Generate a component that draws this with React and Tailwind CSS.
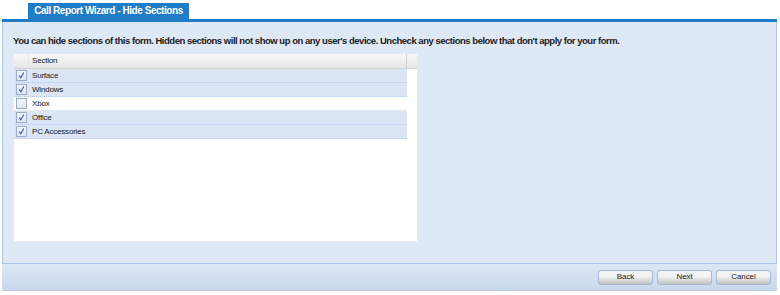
import React from "react";

const rows = [
  { name: "Surface", checked: true },
  { name: "Windows", checked: true },
  { name: "Xbox", checked: false },
  { name: "Office", checked: true },
  { name: "PC Accessories", checked: true },
];

function Check({ checked }) {
  return (
    <div className="w-[11px] h-[11px] border border-[#9aaecb] bg-gradient-to-b from-[#f4f6f9] to-[#e0e6ee] flex items-center justify-center">
      {checked && (
        <svg width="9" height="9" viewBox="0 0 9 9">
          <path d="M2.2 4.6 L3.8 6.8 L6.8 1.6" fill="none" stroke="#2a55b5" strokeWidth="1.1" />
        </svg>
      )}
    </div>
  );
}

function Btn({ children }) {
  return (
    <div className="w-[55px] h-[15px] rounded-[3px] border border-[#a3b9d6] bg-gradient-to-b from-[#f4f4f4] from-40% via-[#e2e2e2] via-60% to-[#c2c2c2] flex items-center justify-center text-[8px] text-[#222] tracking-[-0.1px]">
      {children}
    </div>
  );
}

export default function App() {
  return (
    <div className="w-[780px] h-[295px] bg-white font-['Liberation_Sans',Arial,sans-serif]">
      <div className="h-[19px] flex items-end pl-[28px] pt-[3px]">
        <div className="h-[16px] w-[161px] bg-[#1f7cc6] text-white font-bold text-[10px] tracking-[-0.45px] flex items-center justify-center leading-none whitespace-nowrap">
          Call Report Wizard - Hide Sections
        </div>
      </div>
      <div className="mx-[2px] mr-[3px] border-t-[3px] border-[#1f7cc6]">
        <div className="h-[241px] bg-[#dfe8f5] border-l border-r border-[#a9c4e8] px-[10px] pt-[13px] flex flex-col">
          <div className="text-[9.5px] font-bold text-[#222] leading-[11px] tracking-[-0.48px] whitespace-nowrap">
            You can hide sections of this form. Hidden sections will not show up on any user's device. Uncheck any sections below that don't apply for your form.
          </div>
          <div className="mt-[7px] w-[405px] h-[189px] bg-white border border-[#e4ebf4] flex flex-col">
            <div className="h-[15px] flex bg-gradient-to-b from-[#f8f8f8] to-[#e6e6e6] border-b border-[#d4d4d4] text-[8px] text-[#222] tracking-[-0.2px]">
              <div className="w-[15px] border-r border-[#e6e6e6]" />
              <div className="flex-1 flex items-center pl-[3px] border-r border-[#cfcfcf]">Section</div>
              <div className="w-[10px]" />
            </div>
            {rows.map((r) => (
              <div key={r.name} className="flex">
                <div
                  className={
                    "w-[393px] h-[14px] flex items-center text-[8px] text-[#222] tracking-[-0.2px] border-b " +
                    (r.checked ? "bg-[#dbe5f3] border-dotted border-[#b8cbe6]" : "bg-white border-[#e8e8e8]")
                  }
                >
                  <div className="w-[15px] flex justify-center">
                    <Check checked={r.checked} />
                  </div>
                  <div className="pl-[3px]">{r.name}</div>
                </div>
              </div>
            ))}
          </div>
        </div>
        <div className="h-[28px] bg-gradient-to-b from-[#dde7f4] to-[#c8d8ec] border-t border-[#a9c4e8] border-b border-b-[#c0d2ea] flex items-center justify-end gap-[4px] pr-[6px]">
          <Btn>Back</Btn>
          <Btn>Next</Btn>
          <Btn>Cancel</Btn>
        </div>
      </div>
    </div>
  );
}
